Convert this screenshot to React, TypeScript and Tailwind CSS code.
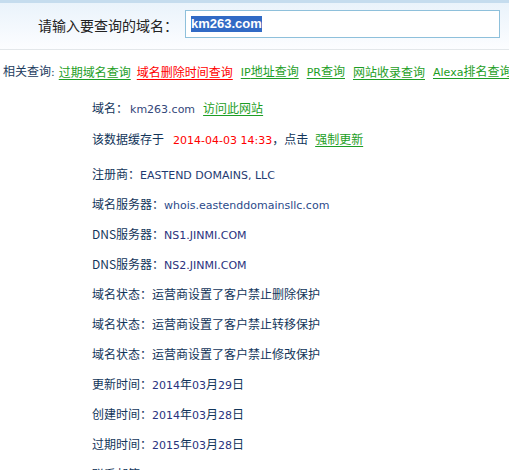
const lat = "font-['DejaVu_Sans',sans-serif] text-[11px]";

function L({ children, className = '' }: { children: React.ReactNode; className?: string }) {
  return <span className={`font-['DejaVu_Sans',sans-serif] text-[11px] ${className}`}>{children}</span>;
}

const links: Array<{ text: React.ReactNode; red?: boolean }> = [
  { text: '过期域名查询' },
  { text: '域名删除时间查询', red: true },
  { text: <><L>IP</L>地址查询</> },
  { text: <><L>PR</L>查询</> },
  { text: '网站收录查询' },
  { text: <><L>Alexa</L>排名查询</> },
];

const rows: Array<{ label: string; value: React.ReactNode }> = [
  { label: '注册商：', value: <L className="text-[#1f3b72]">EASTEND DOMAINS, LLC</L> },
  { label: '域名服务器：', value: <L className="text-[#2b4a8a]">whois.eastenddomainsllc.com</L> },
  { label: 'DNS服务器：', value: <L className="text-[#2a327e]">NS1.JINMI.COM</L> },
  { label: 'DNS服务器：', value: <L className="text-[#2a327e]">NS2.JINMI.COM</L> },
  { label: '域名状态：', value: '运营商设置了客户禁止删除保护' },
  { label: '域名状态：', value: '运营商设置了客户禁止转移保护' },
  { label: '域名状态：', value: '运营商设置了客户禁止修改保护' },
  { label: '更新时间：', value: <><L className="text-[#2a327e]">2014</L>年<L className="text-[#2a327e]">03</L>月<L className="text-[#2a327e]">29</L>日</> },
  { label: '创建时间：', value: <><L className="text-[#2a327e]">2014</L>年<L className="text-[#2a327e]">03</L>月<L className="text-[#2a327e]">28</L>日</> },
  { label: '过期时间：', value: <><L className="text-[#2a327e]">2015</L>年<L className="text-[#2a327e]">03</L>月<L className="text-[#2a327e]">28</L>日</> },
  { label: '联系邮箱：', value: <L className="text-[#2a327e]">domain@jinmi.com</L> },
];

export default function App() {
  return (
    <div className="w-[509px] h-[470px] overflow-hidden bg-white text-[12px] text-[#12355a] font-['Noto_Sans_CJK_SC',sans-serif]">
      {/* search header */}
      <div className="h-[50px] border-t-[3px] border-t-[#c5dcee] border-b border-b-[#e3e7ea] bg-gradient-to-b from-[#eaf3fb] to-[#fcfdff]">
        <div className="flex items-center mt-[7px] h-[28px]">
          <span className="ml-[38px] pt-[2px] text-[14px] text-[#222]">请输入要查询的域名：</span>
          <div className="ml-[7px] w-[315px] h-[28px] border border-[#8ec0db] bg-white flex items-center pl-[5px]">
            <span className="bg-[#316ac5] text-white font-bold text-[13px] leading-[16px] font-['Liberation_Sans',sans-serif]">
              km263.com
            </span>
          </div>
        </div>
      </div>

      {/* related queries */}
      <div className="mt-[11px] h-[22px] leading-[22px] flex items-center pl-[3px] whitespace-nowrap">
        <span className="text-[#1c3b5e]">相关查询<span className={lat}>:</span></span>
        {links.map((l, i) => (
          <a
            key={i}
            href="#"
            className={`${i === 0 ? 'ml-[4px]' : i === 1 ? 'ml-[6px]' : 'ml-[8px]'} underline underline-offset-2 ${l.red ? 'text-[#ff0000]' : 'text-[#1d9e25]'}`}
          >
            {l.text}
          </a>
        ))}
      </div>

      {/* result */}
      <div className="mt-[10px] pl-[92px]">
        <div className="h-[30px] leading-[30px] whitespace-nowrap">
          域名：<L className="text-[#34477a] ml-[2px]">km263.com</L>
          <a href="#" className="ml-[8px] underline underline-offset-2 text-[#1d9e25]">访问此网站</a>
        </div>
        <div className="mt-[1px] h-[30px] leading-[30px] whitespace-nowrap">
          该数据缓存于
          <L className="ml-[9px] text-[#ff0000]">2014-04-03 14:33</L>
          ，点击
          <a href="#" className="ml-[7px] underline underline-offset-2 text-[#1d9e25]">强制更新</a>
        </div>
        <div className="mt-[5px]">
          {rows.map((r, i) => (
            <div key={i} className="h-[30px] leading-[30px] whitespace-nowrap">
              {r.label}
              {r.value}
            </div>
          ))}
        </div>
      </div>
    </div>
  );
}
